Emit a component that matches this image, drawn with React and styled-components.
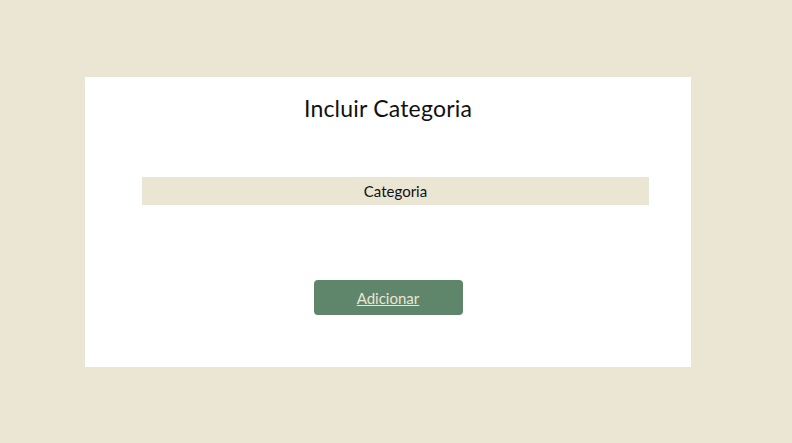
import styled, { createGlobalStyle } from "styled-components";

const GlobalStyle = createGlobalStyle`
  html, body {
    margin: 0;
    padding: 0;
    background: #ebe5d4;
    font-family: "Lato", "Noto Sans", sans-serif;
  }
`;

const Page = styled.main`
  min-height: 443px;
  padding: 77px 0 0 85px;
  box-sizing: border-box;
`;

const Card = styled.section`
  width: 606px;
  height: 290px;
  background: #ffffff;
  display: flex;
  flex-direction: column;
  align-items: center;
  box-sizing: border-box;
  padding-top: 16px;
`;

const Title = styled.h1`
  margin: 0;
  font-size: 23px;
  font-weight: 400;
  color: #111;
  line-height: 30px;
  letter-spacing: 0.2px;
`;

const Input = styled.input`
  margin: 54px 0 0 15px;
  width: 507px;
  height: 28px;
  border: none;
  outline: none;
  background: #ebe5d4;
  text-align: center;
  font-family: "Lato", "Noto Sans", sans-serif;
  font-size: 15px;
  color: #111;
  padding: 0;
  &::placeholder {
    color: #111;
  }
`;

const Button = styled.button`
  margin-top: 75px;
  width: 149px;
  height: 35px;
  border: none;
  border-radius: 4px;
  background: #5f866b;
  color: #ebe5d4;
  font-family: "Lato", "Noto Sans", sans-serif;
  font-size: 15px;
  text-decoration: underline;
  cursor: pointer;
`;

const App = () => {
  return (
    <>
      <GlobalStyle />
      <Page>
        <Card>
          <Title>Incluir Categoria</Title>
          <Input placeholder="Categoria" />
          <Button>Adicionar</Button>
        </Card>
      </Page>
    </>
  );
};

export default App;
